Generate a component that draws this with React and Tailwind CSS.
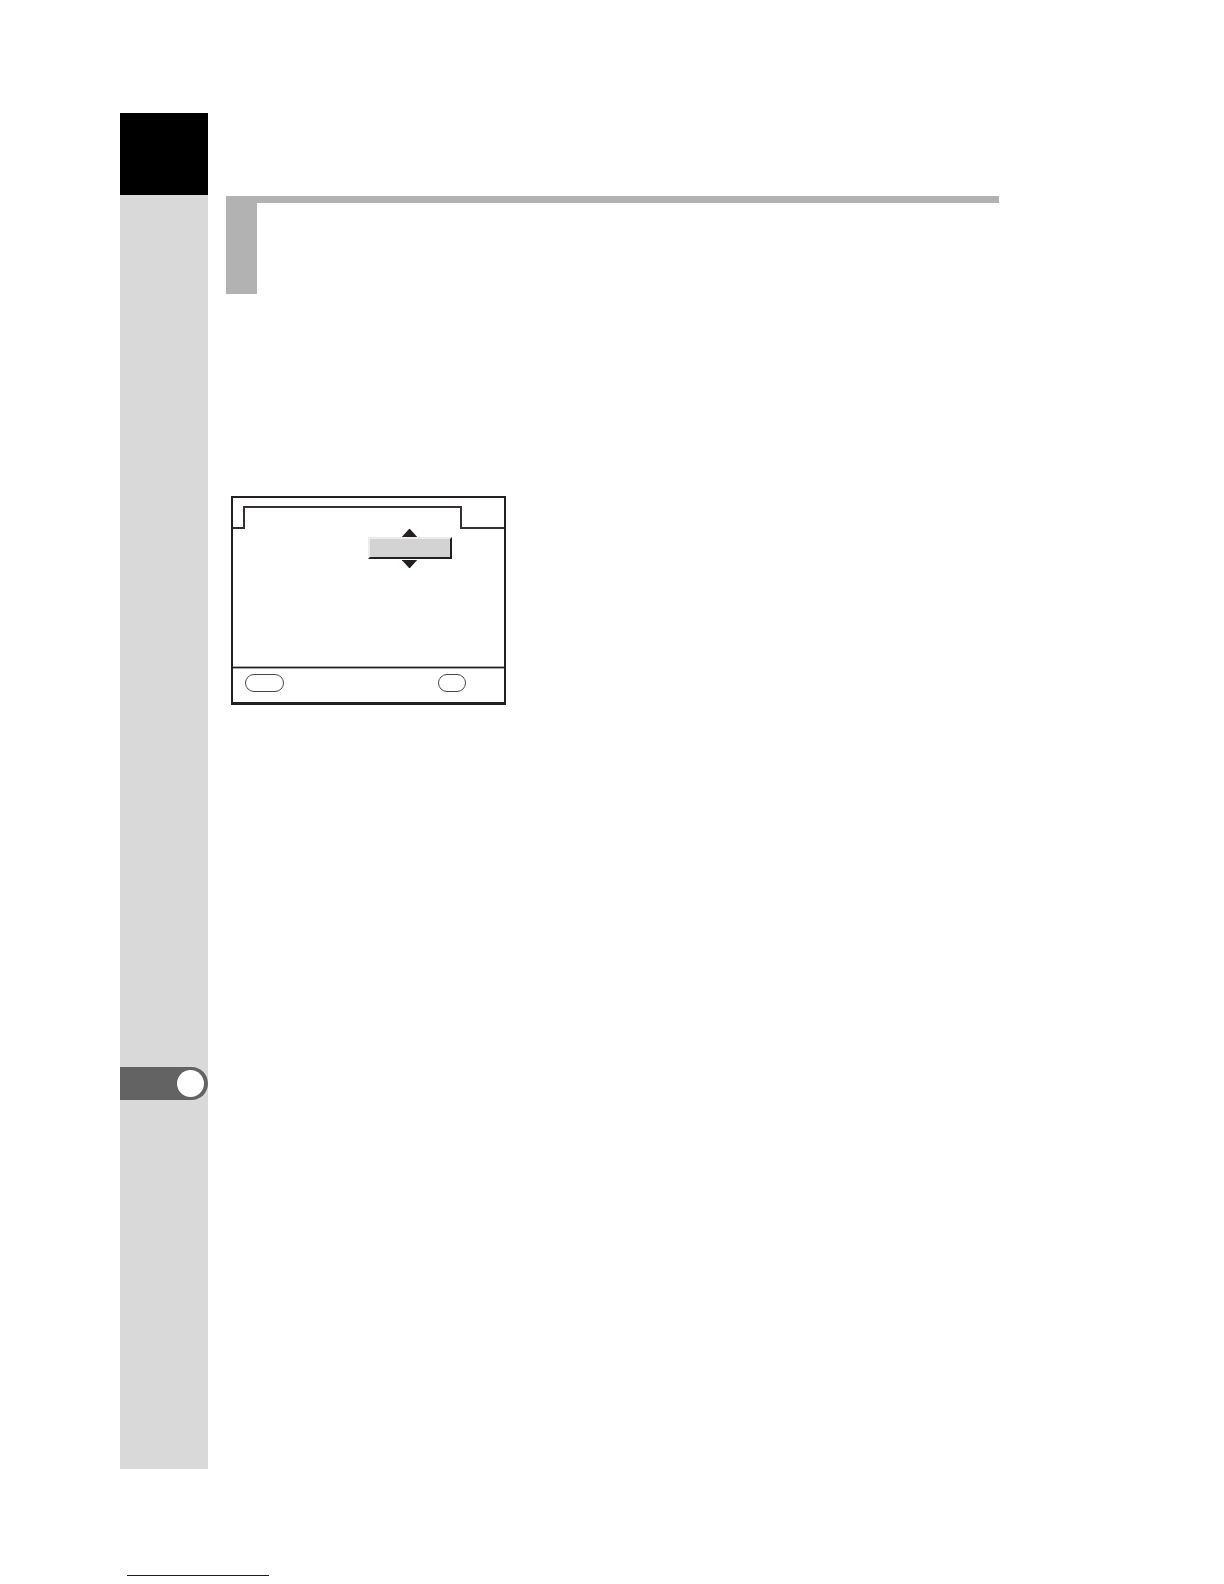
import React from 'react';

const Sidebar = () => {
  return (
    <aside className="w-[88px] shrink-0 bg-[#d9d9d9]">
      <div className="h-[82px] bg-black" />
      {/* Chapter marker */}
      <div className="mt-[872px] flex h-[33px] items-center justify-end rounded-r-full bg-[#636363] pr-1">
        <div className="size-[27px] rounded-full bg-white" />
      </div>
    </aside>
  );
};

const ValueSpinner = () => {
  return (
    <div className="flex w-[84px] flex-col items-center">
      <svg width="16" height="8" viewBox="0 0 16 8" className="block">
        <path d="M7.5 -0.5 L15.2 8 H-0.2 Z" fill="#231f20" />
      </svg>
      <button
        type="button"
        aria-label="Value"
        className="block h-[22px] w-full border-2 border-t-[#ebebeb] border-r-[#231f20] border-b-[#231f20] border-l-[#ebebeb] bg-[#d3d3d3]"
      />
      <svg width="16" height="8" viewBox="0 0 16 8" className="mt-px block">
        <path d="M-0.2 0 H15.2 L7.5 8.5 Z" fill="#231f20" />
      </svg>
    </div>
  );
};

const MenuScreen = () => {
  return (
    <section className="w-[275px] border-2 border-b-[3px] border-[#231f20]">
      <div className="flex h-[31px] items-end">
        <div className="h-full w-[10px] border-b-2 border-[#353132]" />
        <div className="h-[23px] w-[219px] border-x-2 border-t-2 border-[#353132]" />
        <div className="h-full flex-1 border-b-2 border-[#353132]" />
      </div>

      <div className="h-[137px] pl-[135px]">
        <ValueSpinner />
      </div>

      <div className="h-[3px] border-y border-[#a8aaa9] bg-[#231f20]" />
      <div className="flex justify-between pt-[5px] pr-[38px] pb-[10px] pl-3">
        <button
          type="button"
          aria-label="Menu"
          className="h-[18px] w-[39px] rounded-[9px] border border-[#4a4748]"
        />
        <button
          type="button"
          aria-label="OK"
          className="h-[18px] w-[28px] rounded-[9px] border border-[#4a4748]"
        />
      </div>
    </section>
  );
};

const App = () => {
  return (
    <div className="flex min-h-screen flex-col bg-white pt-[113px] font-['Liberation_Sans',sans-serif]">
      <div className="flex flex-1 pl-[120px]">
        <Sidebar />
        <main className="min-w-0 flex-1 pt-[83px] pr-[225px] pl-[18px]">
          <header className="border-t-[7px] border-[#b2b2b2]">
            <div className="h-[91px] w-[31px] bg-[#b2b2b2]" />
          </header>
          <div className="pt-[202px] pl-[5px]">
            <MenuScreen />
          </div>
        </main>
      </div>

      <footer className="flex h-[115px] items-end pb-2 pl-[127px]">
        <a
          href="#top"
          aria-label="Back to top"
          className="block h-4 w-[142px] border-b border-[#10108c]"
        />
      </footer>
    </div>
  );
};

export default App;
